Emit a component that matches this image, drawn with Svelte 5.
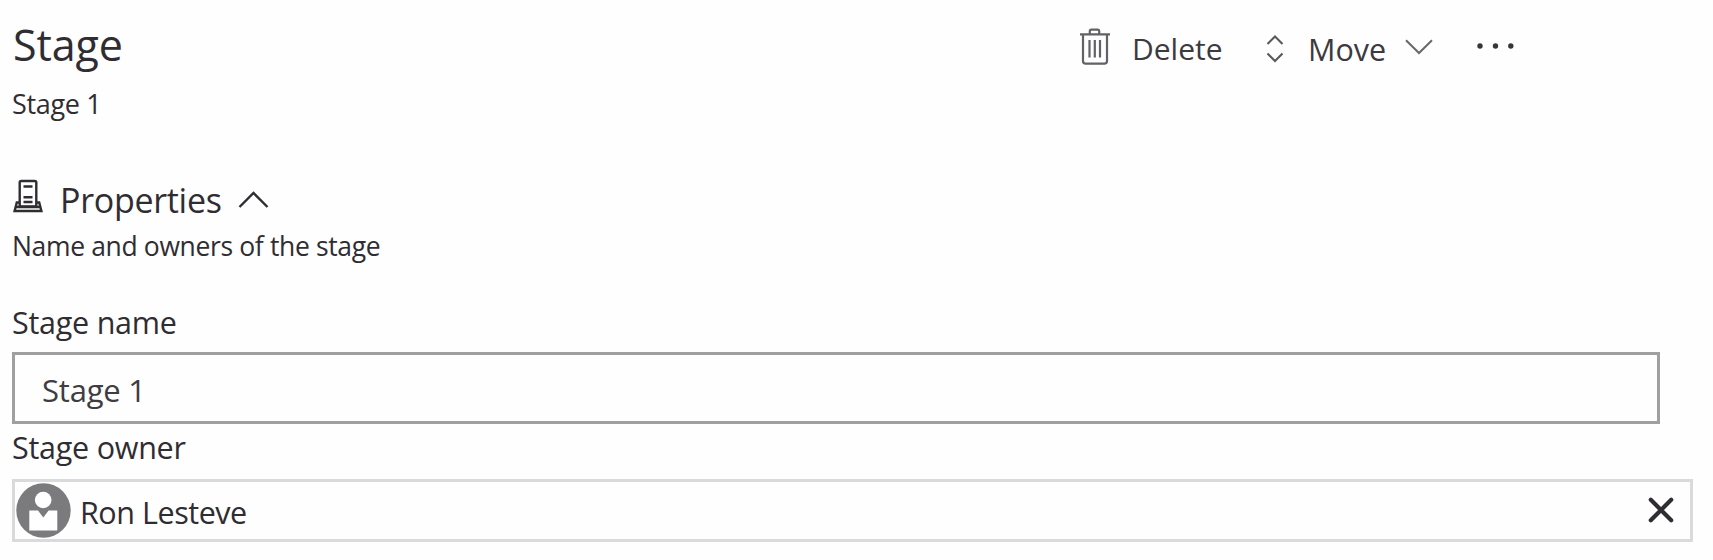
<script>
  let stageName = $state('Stage 1');
  let owner = $state('Ron Lesteve');
</script>

<main class="panel">
  <header class="header">
    <h1>Stage</h1>
    <div class="toolbar">
      <button class="action delete">
        <svg width="32" height="40" viewBox="0 0 32 40" fill="none" stroke="#626166" stroke-width="2.2">
          <path d="M1 7.3H31M4 7.5V34Q4 36.7 6.7 36.7H25.3Q28 36.7 28 34V7.5" />
          <path d="M10.8 7V4.2Q10.8 2.6 12.4 2.6H18.6Q20.2 2.6 20.2 4.2V7" />
          <path d="M10.5 13V30.5M15.8 13V30.5M21 13V30.5" />
        </svg>
        <span>Delete</span>
      </button>
      <button class="action move">
        <svg width="18" height="30" viewBox="0 0 18 30" fill="none" stroke="#59585d" stroke-width="2.1">
          <path d="M1.5 10L9 2.5L16.5 10M1.5 19.5L9 27L16.5 19.5" />
        </svg>
        <span>Move</span>
        <svg class="down" width="28" height="16" viewBox="0 0 28 16" fill="none" stroke="#68676b" stroke-width="2">
          <path d="M1 1.2L14 14L27 1.2" />
        </svg>
      </button>
      <button class="action more" aria-label="More">
        <svg width="38" height="8" viewBox="0 0 38 8" fill="#37353a">
          <circle cx="4" cy="4" r="2.7" /><circle cx="19.5" cy="4" r="2.7" /><circle cx="34.8" cy="4" r="2.7" />
        </svg>
      </button>
    </div>
  </header>
  <p class="subtitle">{stageName}</p>

  <section>
    <h2>
      <svg class="stage-icon" width="31" height="34" viewBox="0 0 31 34" fill="none" stroke="#302d32" stroke-width="2.4">
        <path d="M6.7 27.5V3.6Q6.7 2 8.3 2H21.7Q23.3 2 23.3 3.6V27.5Z" />
        <path d="M6.5 23.5H3.8L1.6 32H28.4L26.2 23.5H23.5M2.6 28H27.6" />
        <path d="M10.5 7.5H19.5M10.5 18.3H19.5M10.5 23H19.5" />
      </svg>
      <span>Properties</span>
      <svg class="caret" width="31" height="18" viewBox="0 0 31 18" fill="none" stroke="#302d32" stroke-width="2.4">
        <path d="M1.5 16L15.5 2L29.5 16" />
      </svg>
    </h2>
    <p class="description">Name and owners of the stage</p>

    <label class="name-label" for="stage-name">Stage name</label>
    <div class="name-field" id="stage-name"><span>{stageName}</span></div>

    <div class="owner-label">Stage owner</div>
    <div class="owner-field">
      <svg class="avatar" width="55" height="55" viewBox="0 0 55 55">
        <circle cx="27.5" cy="27.5" r="27.2" fill="#7b7b7e" />
        <circle cx="27.2" cy="17" r="8.3" fill="#fff" />
        <path d="M13.3 27.5H22L27.3 34.5L32.6 27.5H41.3V47.5H13.3Z" fill="#fff" />
      </svg>
      <span class="owner">{owner}</span>
      <button class="remove" aria-label="Remove">
        <svg width="26" height="26" viewBox="0 0 26 26" stroke="#302d32" stroke-width="4.2" stroke-linecap="round">
          <path d="M2.8 2.8L23.2 23.2M23.2 2.8L2.8 23.2" />
        </svg>
      </button>
    </div>
  </section>
</main>

<style>
  :global(body) { margin: 0; background: #fefefe; }
  .panel {
    box-sizing: border-box;
    height: 560px;
    padding: 13px 20px 0 12px;
    background: #fefefe;
    color: #302d32;
    font-family: "Open Sans", "Noto Sans", sans-serif;
    white-space: nowrap;
  }
  h1, h2, p { margin: 0; font-weight: 400; }
  svg { display: block; flex: none; }
  button { border: 0; padding: 0; background: none; font: inherit; color: inherit; text-align: left; }

  .header { display: flex; height: 60px; }
  h1 { width: 1066px; padding: 2px 0 0 1px; font-size: 43px; line-height: 60px; letter-spacing: -0.1px; }
  .toolbar { display: flex; height: 60px; color: #3c3a3f; font-size: 30px; line-height: 40px; }
  .action { display: flex; align-items: flex-start; }
  .action span { padding-top: 16px; }
  .delete { width: 187px; gap: 21px; }
  .delete svg { margin-top: 14px; }
  .move { width: 210px; }
  .move svg { margin-top: 21px; }
  .move span { width: 97px; margin-left: 24px; font-size: 30.5px; }
  .move .down { margin-top: 26px; }
  .more svg { margin-top: 29px; }

  .subtitle { margin-top: 13px; font-size: 27px; line-height: 36px; letter-spacing: -0.35px; }

  h2 { display: flex; height: 46px; margin-top: 54px; font-size: 34px; line-height: 46px; letter-spacing: -0.3px; }
  .stage-icon { margin-top: 3px; margin-left: 1px; }
  h2 span { width: 178px; margin-left: 16px; padding-top: 1px; }
  .caret { margin-top: 15px; }
  .description { margin-top: 6px; font-size: 26.5px; line-height: 36px; letter-spacing: -0.36px; }

  .name-label, .owner-label { display: block; font-size: 30.5px; line-height: 40px; letter-spacing: -0.25px; }
  .name-label { margin-top: 38px; }
  .name-field {
    box-sizing: border-box;
    width: 1648px;
    height: 72px;
    margin-top: 10px;
    padding: 2px 27px 0;
    border: 3px solid #a0a0a2;
    color: #3f3d42;
    font-size: 31px;
    line-height: 67px;
    letter-spacing: -0.2px;
  }
  .owner-label { margin-top: 3px; }
  .owner-field {
    display: flex;
    align-items: center;
    box-sizing: border-box;
    height: 63px;
    margin-top: 12px;
    padding: 0 16px 0 1px;
    border: 3px solid #dadada;
  }
  .owner { flex: 1; padding: 3px 0 0 9px; font-size: 30.5px; line-height: 40px; letter-spacing: -0.45px; }
  .remove { margin-bottom: 2px; }
</style>
